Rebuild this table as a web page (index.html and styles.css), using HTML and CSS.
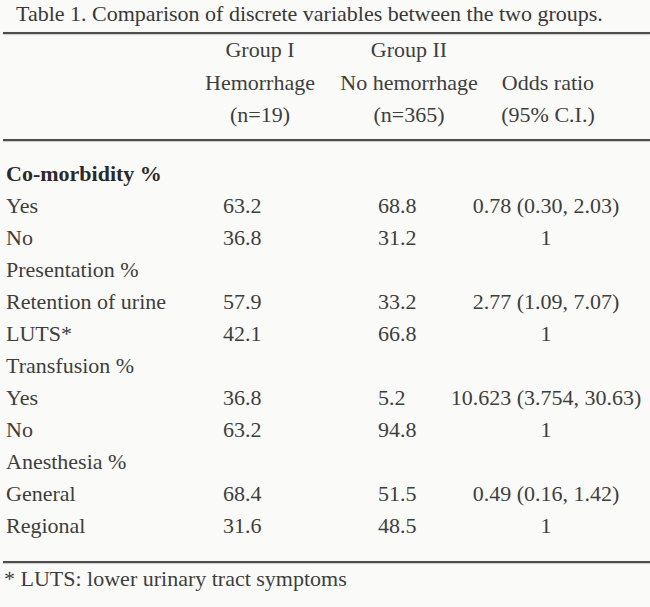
FILE: index.html
```html
<!DOCTYPE html>
<html>
<head>
<meta charset="utf-8">
<link rel="stylesheet" href="styles.css">
</head>
<body>
<div class="page">
  <div class="title">Table 1. Comparison of discrete variables between the two groups.</div>
  <div class="rule"></div>
  <div class="head">
    <div class="hrow"><span class="h1">Group I</span><span class="h2">Group II</span><span class="h3"></span></div>
    <div class="hrow"><span class="h1">Hemorrhage</span><span class="h2">No hemorrhage</span><span class="h3">Odds ratio</span></div>
    <div class="hrow"><span class="h1">(n=19)</span><span class="h2">(n=365)</span><span class="h3">(95% C.I.)</span></div>
  </div>
  <div class="rule"></div>
  <div class="body">
    <div class="row"><span class="lab strong">Co-morbidity %</span></div>
    <div class="row"><span class="lab">Yes</span><span class="c2">63.2</span><span class="c3">68.8</span><span class="c4">0.78 (0.30, 2.03)</span></div>
    <div class="row"><span class="lab">No</span><span class="c2">36.8</span><span class="c3">31.2</span><span class="c4">1</span></div>
    <div class="row"><span class="lab">Presentation %</span></div>
    <div class="row"><span class="lab">Retention of urine</span><span class="c2">57.9</span><span class="c3">33.2</span><span class="c4">2.77 (1.09, 7.07)</span></div>
    <div class="row"><span class="lab">LUTS*</span><span class="c2">42.1</span><span class="c3">66.8</span><span class="c4">1</span></div>
    <div class="row"><span class="lab">Transfusion %</span></div>
    <div class="row"><span class="lab">Yes</span><span class="c2">36.8</span><span class="c3">5.2</span><span class="c4">10.623 (3.754, 30.63)</span></div>
    <div class="row"><span class="lab">No</span><span class="c2">63.2</span><span class="c3">94.8</span><span class="c4">1</span></div>
    <div class="row"><span class="lab">Anesthesia %</span></div>
    <div class="row"><span class="lab">General</span><span class="c2">68.4</span><span class="c3">51.5</span><span class="c4">0.49 (0.16, 1.42)</span></div>
    <div class="row"><span class="lab">Regional</span><span class="c2">31.6</span><span class="c3">48.5</span><span class="c4">1</span></div>
  </div>
  <div class="rule"></div>
  <div class="foot">* LUTS: lower urinary tract symptoms</div>
</div>
</body>
</html>
```
FILE: styles.css
```css
html, body {
  margin: 0;
  padding: 0;
  background: #fafaf8;
}
.page {
  width: 650px;
  height: 607px;
  overflow: hidden;
  font-family: "Liberation Serif", "Times New Roman", serif;
  font-size: 22px;
  color: #3e3e3e;
}
.title {
  height: 28px;
  line-height: 28px;
  padding-left: 16px;
  margin-bottom: 4px;
  white-space: nowrap;
  color: #383838;
}
.rule {
  height: 2px;
  margin-left: 3px;
  background: #4e4e4e;
  box-shadow: 0 0.5px 1px rgba(0,0,0,0.35);
}
.head {
  padding-bottom: 7px;
}
.hrow {
  display: flex;
  height: 32.5px;
  line-height: 32.5px;
  padding-left: 200px;
}
.hrow span {
  display: block;
  text-align: center;
  white-space: nowrap;
}
.h1 { width: 120px; }
.h2 { width: 178px; }
.h3 { width: 100px; }
.body {
  padding-top: 17px;
  padding-bottom: 19px;
}
.row {
  display: flex;
  height: 32px;
  line-height: 32px;
  white-space: nowrap;
}
.lab {
  box-sizing: border-box;
  width: 223px;
  padding-left: 6px;
}
.strong {
  font-weight: bold;
  color: #2a2a2a;
}
.c2 { width: 155px; }
.c3 { width: 68px; }
.c4 {
  width: 200px;
  text-align: center;
}
.foot {
  height: 32px;
  line-height: 32px;
  padding-left: 4px;
  white-space: nowrap;
}
```
